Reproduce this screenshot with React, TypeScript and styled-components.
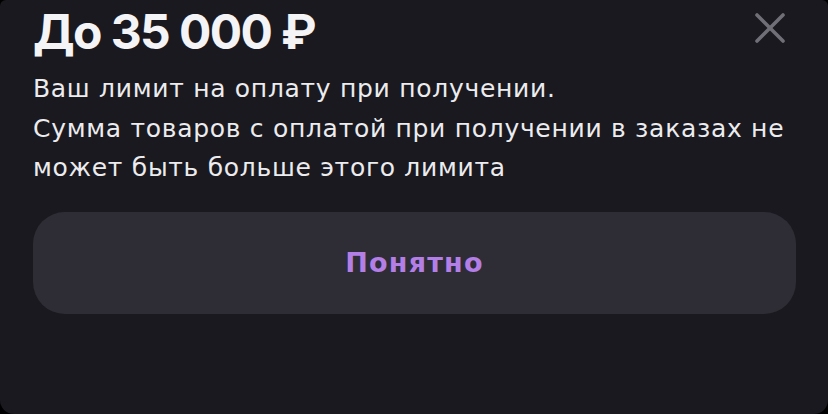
import React from "react";
import styled, { createGlobalStyle } from "styled-components";

const GlobalStyle = createGlobalStyle`
  html, body {
    margin: 0;
    padding: 0;
    background: #000;
  }
  body {
    font-family: "DejaVu Sans", Inter, sans-serif;
    -webkit-font-smoothing: antialiased;
  }
`;

const Sheet = styled.div`
  width: 828px;
  height: 414px;
  box-sizing: border-box;
  padding: 0 32px 0 33px;
  background: #1a191f;
  border-radius: 6px 6px 14px 14px;
  display: flex;
  flex-direction: column;
`;

const Header = styled.div`
  display: flex;
  justify-content: space-between;
  align-items: flex-start;
`;

const Title = styled.h1`
  margin: 0;
  padding-top: 2px;
  font-family: Inter, "Noto Sans", sans-serif;
  font-size: 48px;
  line-height: 60px;
  font-weight: 700;
  color: #f4f4f6;
  letter-spacing: -1.6px;
`;

const CloseButton = styled.button`
  width: 52px;
  height: 52px;
  margin-top: 2px;
  padding: 0;
  border: none;
  background: transparent;
  display: flex;
  align-items: center;
  justify-content: center;
  cursor: pointer;
`;

const Text = styled.p`
  margin: 7px 0 0;
  font-size: 25px;
  line-height: 39.5px;
  font-weight: 400;
  color: #ececef;
  letter-spacing: 0.7px;
`;

const OkButton = styled.button`
  margin-top: 24px;
  height: 102px;
  width: 100%;
  border: none;
  border-radius: 32px;
  background: #2e2d35;
  color: #b37fe6;
  font-family: "DejaVu Sans", Inter, sans-serif;
  font-size: 27px;
  font-weight: 700;
  letter-spacing: 1.2px;
  cursor: pointer;
`;

const CloseIcon = () => (
  <svg width="30" height="30" viewBox="0 0 30 30" fill="none">
    <path
      d="M2 2 L28 28 M28 2 L2 28"
      stroke="#706f77"
      strokeWidth="3.6"
      strokeLinecap="round"
    />
  </svg>
);

const App: React.FC = () => {
  return (
    <>
      <GlobalStyle />
      <Sheet>
        <Header>
          <Title>До 35 000 ₽</Title>
          <CloseButton aria-label="Закрыть">
            <CloseIcon />
          </CloseButton>
        </Header>
        <Text>
          Ваш лимит на оплату при получении.
          <br />
          Сумма товаров с оплатой при получении в заказах не может быть больше
          этого лимита
        </Text>
        <OkButton>Понятно</OkButton>
      </Sheet>
    </>
  );
};

export default App;
